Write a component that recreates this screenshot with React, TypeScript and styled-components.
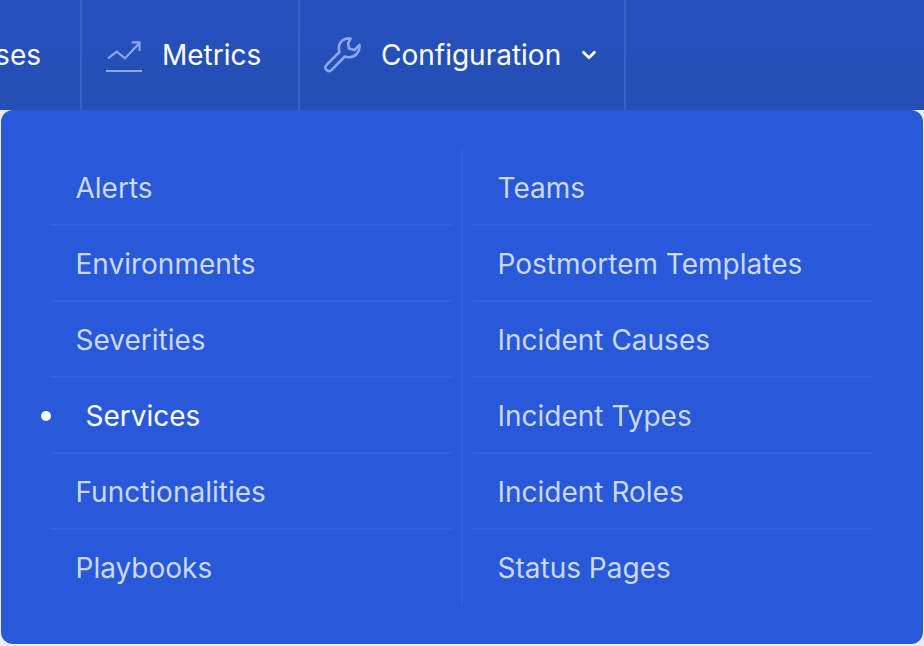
import styled, { createGlobalStyle } from "styled-components";
import { ChevronDown } from "lucide-react";

const GlobalStyle = createGlobalStyle`
  html, body {
    margin: 0;
    height: 100%;
    overflow: hidden;
    background: #ececec;
  }
  body {
    font-family: Inter, "Liberation Sans", sans-serif;
  }
`;

const Page = styled.div`
  width: 924px;
  height: 646px;
  overflow: hidden;
`;

const Navbar = styled.nav`
  display: flex;
  height: 110px;
  margin-left: -120px;
  background: linear-gradient(to bottom, #2650bd, #244fb4);
`;

const NavItem = styled.a<{ $width: number; $end?: boolean }>`
  display: flex;
  align-items: center;
  justify-content: ${(p) => (p.$end ? "flex-end" : "flex-start")};
  gap: 19px;
  box-sizing: border-box;
  width: ${(p) => p.$width}px;
  padding: ${(p) => (p.$end ? "0 39px 0 0" : "0 0 0 24px")};
  border-right: 2px solid #3b62c2;
  color: #fff;
  font-size: 28px;
  white-space: nowrap;

  svg.main {
    color: #8fa6ee;
    flex: none;
  }
  svg.caret {
    margin-left: -2px;
    flex: none;
  }
`;

const NavLabel = styled.span`
  padding-bottom: 1px;
`;

const Panel = styled.div`
  display: grid;
  grid-template-columns: 410px 1fr;
  box-sizing: border-box;
  width: 922px;
  height: 534px;
  margin-left: 1px;
  padding: 40px 50px;
  border-radius: 12px;
  background: #2859da;
`;

const Column = styled.ul<{ $right?: boolean }>`
  list-style: none;
  margin: 0;
  padding: 0 ${(p) => (p.$right ? "0 0 10px" : "10px 0 0")};
  border-left: ${(p) => (p.$right ? "2px solid #3360dd" : "0")};
`;

const Row = styled.li<{ $active?: boolean }>`
  position: relative;
  box-sizing: border-box;
  display: flex;
  align-items: center;
  width: 400px;
  height: 76px;
  padding: 2px 0 0 ${(p) => (p.$active ? 34.5 : 24.5)}px;
  border-bottom: 2px solid #3360dd;
  color: ${(p) => (p.$active ? "#fff" : "#ccd8f6")};
  font-size: 28px;

  &:last-child {
    height: 74px;
    border-bottom: 0;
  }

  ${(p) =>
    p.$active &&
    `
    &::before {
      content: "";
      position: absolute;
      left: -10px;
      top: 33px;
      width: 10px;
      height: 10px;
      border-radius: 50%;
      background: #fff;
    }
  `}
`;

function ChartIcon() {
  return (
    <svg className="main" width="37" height="36" viewBox="0 0 37 36" fill="none" stroke="currentColor" strokeWidth="2.2">
      <path d="M2 21.3 L10.7 14.7 L19 21.3 L33.3 6.3" />
      <path d="M25.7 5.3 H33.5 V14" />
      <path d="M0 34 H36" />
    </svg>
  );
}

function WrenchIcon() {
  return (
    <svg
      className="main"
      width="38"
      height="36"
      viewBox="0 0 38 36"
      fill="none"
      stroke="currentColor"
      strokeWidth="2.6"
      strokeLinejoin="round"
    >
      <path d="M26.5 1.5 C20 0.5 15 5 14.8 10.5 C14.8 12 15 13.5 15.5 15 L2.8 27.6 C1 29.5 1 31.5 2.5 33 C4 34.5 6 34.5 7.7 32.9 L20.8 19.5 C22.5 20 24 20.3 25.5 20.2 C31.5 20 36 15 35.5 8 L30.5 13 L25 11.5 L24 6.5 Z" />
    </svg>
  );
}

const leftItems = ["Alerts", "Environments", "Severities", "Services", "Functionalities", "Playbooks"];
const rightItems = ["Teams", "Postmortem Templates", "Incident Causes", "Incident Types", "Incident Roles", "Status Pages"];

export default function App() {
  return (
    <Page>
      <GlobalStyle />
      <Navbar>
        <NavItem $width={202} $end>
          <NavLabel>Responses</NavLabel>
        </NavItem>
        <NavItem $width={218}>
          <ChartIcon />
          <NavLabel>Metrics</NavLabel>
        </NavItem>
        <NavItem $width={326}>
          <WrenchIcon />
          <NavLabel>Configuration</NavLabel>
          <ChevronDown className="caret" size={22} strokeWidth={3} />
        </NavItem>
      </Navbar>
      <Panel>
        <Column>
          {leftItems.map((item) => (
            <Row key={item} $active={item === "Services"}>
              {item}
            </Row>
          ))}
        </Column>
        <Column $right>
          {rightItems.map((item) => (
            <Row key={item}>{item}</Row>
          ))}
        </Column>
      </Panel>
    </Page>
  );
}
